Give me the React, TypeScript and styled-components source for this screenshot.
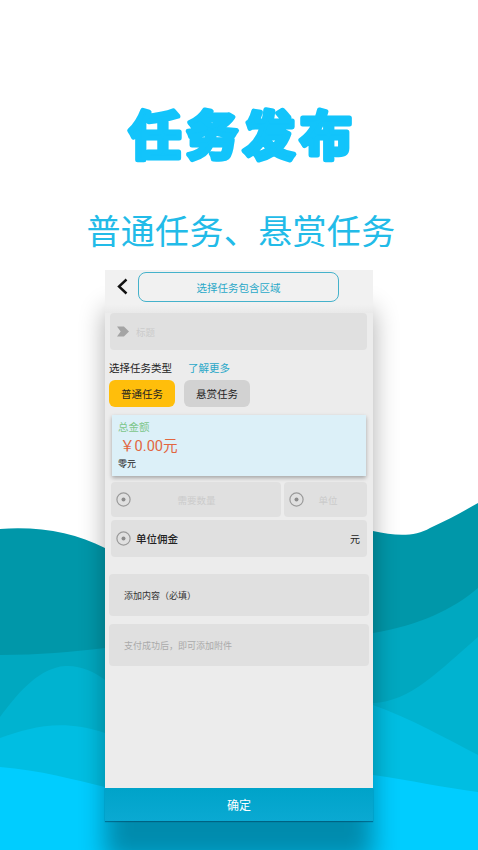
import React from 'react';
import styled, { createGlobalStyle } from 'styled-components';

const GlobalStyle = createGlobalStyle`
  html, body {
    margin: 0;
    padding: 0;
    background: #fff;
  }
`;

const cjk = `"Noto Sans CJK SC", "Noto Sans", sans-serif`;

const Page = styled.div`
  position: relative;
  width: 478px;
  height: 850px;
  overflow: hidden;
  background: #fff;
  font-family: ${cjk};
  display: flex;
  flex-direction: column;
  align-items: center;
`;

const Waves = styled.svg`
  position: absolute;
  left: 0;
  top: 0;
`;

const Title = styled.svg`
  position: relative;
  display: block;
  margin-top: 96px;
  flex: none;
  overflow: visible;
`;

const TitleText = styled.text`
  font-family: ${cjk};
  font-size: 52px;
  font-weight: 700;
  letter-spacing: 5px;
  fill: #12c4fb;
  stroke: #12c4fb;
  stroke-width: 5px;
  stroke-linejoin: round;
  stroke-linecap: round;
`;

const Subtitle = styled.h2`
  position: relative;
  margin: 33px 0 0 4px;
  height: 50px;
  font-size: 34px;
  line-height: 50px;
  letter-spacing: 0.35px;
  font-weight: 400;
  color: #22bbe8;
  white-space: nowrap;
`;

const Phone = styled.div`
  position: relative;
  margin-top: 15px;
  width: 268px;
  height: 551px;
  background: #ececec;
  display: flex;
  flex-direction: column;
  box-shadow: 0 40px 24px rgba(0, 0, 0, 0.32);
`;

const Header = styled.div`
  height: 43px;
  padding: 2px 34px 0 12px;
  box-sizing: border-box;
  display: flex;
  align-items: flex-start;
  gap: 10px;
  background: linear-gradient(#f1f1f1 80%, #e9e9e9);
`;

const BackIcon = styled.svg`
  margin-top: 6px;
  flex: none;
`;

const AreaButton = styled.div`
  flex: 1;
  height: 30px;
  box-sizing: border-box;
  border: 1px solid #45b2cb;
  border-radius: 8px;
  display: flex;
  align-items: center;
  justify-content: center;
  font-size: 10.5px;
  color: #2aa8c8;
`;

const Body = styled.div`
  flex: 1;
  display: flex;
  flex-direction: column;
  padding: 0 3px 0 4px;
`;

const Field = styled.div<{ $height?: number }>`
  height: ${({ $height }) => $height || 37}px;
  background: #e0e0e0;
  border-radius: 4px;
  display: flex;
  align-items: center;
  box-sizing: border-box;
`;

const TitleField = styled(Field)`
  margin: 0 3px 0 1px;
  padding-left: 7px;
  gap: 7px;
`;

const Placeholder = styled.span<{ $inset?: number }>`
  font-size: 9.5px;
  color: #cbcbcb;
  ${({ $inset }) => $inset && `flex: 1; text-align: center; padding-right: ${$inset}px;`}
`;

const TypeLabels = styled.div`
  margin-top: 9px;
  height: 16px;
  display: flex;
  align-items: center;
  gap: 16px;
  font-size: 10.5px;
  color: #222;
`;

const LearnMore = styled.span`
  color: #2aa8c8;
`;

const TypeButtons = styled.div`
  margin-top: 5px;
  display: flex;
  gap: 9px;
`;

const TypeButton = styled.div<{ $active?: boolean }>`
  width: 66px;
  height: 27px;
  border-radius: 6px;
  display: flex;
  align-items: center;
  justify-content: center;
  font-size: 10.5px;
  color: #222;
  background: ${({ $active }) => ($active ? '#ffbe0b' : '#d2d2d2')};
`;

const AmountCard = styled.div`
  margin: 8px 4px 0 3px;
  height: 61px;
  padding: 4px 6px 0;
  box-sizing: border-box;
  background: #dcf0f8;
  box-shadow: 0 2px 4px rgba(0, 0, 0, 0.3);
  display: flex;
  flex-direction: column;
`;

const AmountLabel = styled.span`
  font-size: 10.5px;
  line-height: 16px;
  color: #7cc68a;
`;

const AmountValue = styled.span`
  font-family: Roboto, ${cjk};
  font-size: 14.6px;
  line-height: 22px;
  margin-left: 2px;
  color: #e2663f;
`;

const AmountWords = styled.span`
  font-size: 9px;
  line-height: 14px;
  color: #222;
`;

const SplitRow = styled.div`
  margin: 6px 3px 0 2px;
  display: flex;
  gap: 3px;
`;

const HalfField = styled(Field)<{ $grow: number }>`
  flex: ${({ $grow }) => $grow} 1 0;
  padding: 0 5px;
`;

const CommissionField = styled(Field)`
  margin: 3px 3px 0 2px;
  padding: 0 7px 0 5px;
  gap: 5px;
  font-size: 10.5px;
  color: #222;
`;

const Grow = styled.span`
  flex: 1;
  font-weight: 500;
`;

const Yuan = styled.span`
  font-size: 10px;
`;

const ContentField = styled(Field)`
  padding-left: 15px;
  font-size: 9px;
  color: #333;
  margin: 17px 1px 0 0;
`;

const AttachField = styled(ContentField)`
  margin-top: 8px;
  color: #aaa;
`;

const Confirm = styled.div`
  height: 33px;
  display: flex;
  align-items: center;
  justify-content: center;
  font-size: 12px;
  color: #fff;
  background: linear-gradient(#00a3c9, #0aa9d2);
  box-shadow: 0 1px 1px rgba(0, 60, 90, 0.5);
`;

const Radio = () => (
  <svg width="15" height="15" viewBox="0 0 15 15" style={{ flex: 'none' }}>
    <circle cx="7.5" cy="7.5" r="6.6" fill="none" stroke="#9a9a9a" strokeWidth="1.2" />
    <circle cx="7.5" cy="7.5" r="2" fill="#8c8c8c" />
  </svg>
);

const layers = [
  { color: '#0097a9', d: 'M0 529C40 526 75 533 105 548C200 590 300 545 373 531C395 536 415 537 430 528C448 520 462 512 478 503V850H0Z' },
  { color: '#00a8c0', d: 'M0 655C40 655 70 652 105 648L373 633C420 625 452 610 478 588V850H0Z' },
  { color: '#00b3d0', d: 'M0 717C20 690 40 668 65 666C80 665 95 672 105 680L373 703C410 702 440 670 478 637V850H0Z' },
  { color: '#00bee2', d: 'M0 738C30 728 60 718 105 733L373 705C410 718 445 738 478 755V850H0Z' },
  { color: '#00cdff', d: 'M0 767C40 770 75 780 105 787L373 775C410 780 445 788 478 792V850H0Z' },
];

export default function App() {
  return (
    <>
      <GlobalStyle />
      <Page>
        <Waves width="478" height="850" viewBox="0 0 478 850">
          {layers.map((l) => (
            <path key={l.color} d={l.d} fill={l.color} />
          ))}
        </Waves>
        <Title width="240" height="76" viewBox="0 0 240 76">
          <TitleText x="124" y="59" textAnchor="middle">任务发布</TitleText>
        </Title>
        <Subtitle>普通任务、悬赏任务</Subtitle>
        <Phone>
          <Header>
            <BackIcon width="11" height="17" viewBox="0 0 11 17">
              <path d="M9.5 1.5L2 8.5L9.5 15.5" fill="none" stroke="#111" strokeWidth="2.4" />
            </BackIcon>
            <AreaButton>选择任务包含区域</AreaButton>
          </Header>
          <Body>
            <TitleField>
              <svg width="12" height="11" viewBox="0 0 13 11">
                <path d="M0 0H7.5L13 5.5L7.5 11H0L4 5.5Z" fill="#a4a4a4" />
              </svg>
              <Placeholder>标题</Placeholder>
            </TitleField>
            <TypeLabels>
              <span>选择任务类型</span>
              <LearnMore>了解更多</LearnMore>
            </TypeLabels>
            <TypeButtons>
              <TypeButton $active>普通任务</TypeButton>
              <TypeButton>悬赏任务</TypeButton>
            </TypeButtons>
            <AmountCard>
              <AmountLabel>总金额</AmountLabel>
              <AmountValue>￥0.00元</AmountValue>
              <AmountWords>零元</AmountWords>
            </AmountCard>
            <SplitRow>
              <HalfField $grow={160} $height={35}>
                <Radio />
                <Placeholder $inset={14}>需要数量</Placeholder>
              </HalfField>
              <HalfField $grow={73} $height={35}>
                <Radio />
                <Placeholder $inset={10}>单位</Placeholder>
              </HalfField>
            </SplitRow>
            <CommissionField>
              <Radio />
              <Grow>单位佣金</Grow>
              <Yuan>元</Yuan>
            </CommissionField>
            <ContentField $height={42}>添加内容（必填）</ContentField>
            <AttachField $height={42}>支付成功后，即可添加附件</AttachField>
          </Body>
          <Confirm>确定</Confirm>
        </Phone>
      </Page>
    </>
  );
}
